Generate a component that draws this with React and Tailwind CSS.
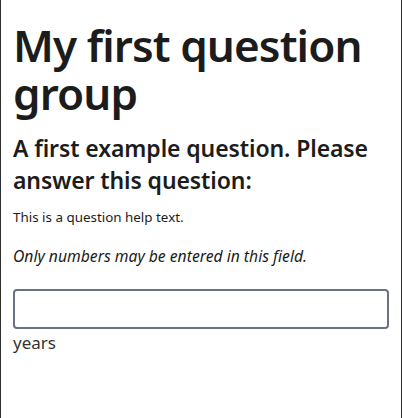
export default function App() {
  return (
    <div
      className="w-[402px] min-h-[418px] border-x border-[#2e2e2e] bg-white px-3 pt-[21px] text-[#1c1c1c]"
      style={{ fontFamily: '"Noto Sans", "Open Sans", sans-serif' }}
    >
      <h1 className="text-[44px] leading-[48px] font-semibold tracking-[-0.9px]">My first question group</h1>
      <h2 className="mt-[15px] text-[23px] leading-[32px] font-semibold tracking-[-0.1px]">
        A first example question. Please answer this question:
      </h2>
      <p className="mt-[11px] text-[13.4px] leading-5">This is a question help text.</p>
      <p className="mt-[17px] text-[15.7px] leading-6 italic">Only numbers may be entered in this field.</p>
      <input
        type="text"
        className="mt-[21px] block h-10 w-full rounded border-2 border-[#6b7083] bg-white px-2 outline-none"
      />
      <div className="pt-[2px] text-[17px] leading-6 text-[#333]">years</div>
    </div>
  );
}
